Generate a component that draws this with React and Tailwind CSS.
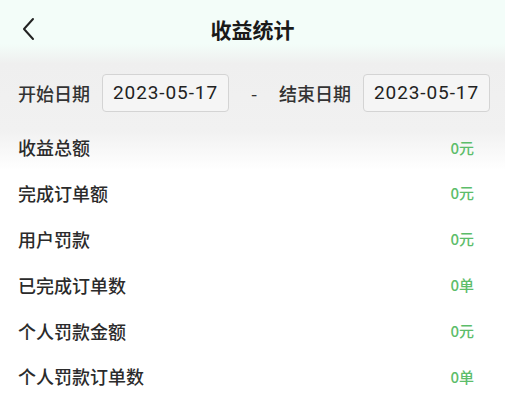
const rows = [
  { label: "收益总额", value: "0元" },
  { label: "完成订单额", value: "0元" },
  { label: "用户罚款", value: "0元" },
  { label: "已完成订单数", value: "0单" },
  { label: "个人罚款金额", value: "0元" },
  { label: "个人罚款订单数", value: "0单" },
];

const DateBox = ({ value }) => (
  <div
    className="ml-[8px] w-[127px] h-[38px] flex items-center justify-center border border-[#d4d4d4] rounded-[4px] bg-[#f5f5f5] text-[19px] tracking-[0.9px] text-[#222]"
    style={{ fontFamily: 'Roboto, "Noto Sans", sans-serif' }}
  >
    {value}
  </div>
);

const App = () => {
  return (
    <div
      className="w-[505px] h-[396px] overflow-hidden bg-[linear-gradient(to_bottom,#f3fdf9_0px,#f3fdf9_44px,#efefef_64px,#f1f1f1_130px,#ffffff_170px)]"
      style={{ fontFamily: '"Noto Sans CJK SC", "Noto Sans", sans-serif' }}
    >
      {/* Header */}
      <div className="relative h-[60px] flex items-center justify-center">
        <svg
          className="absolute left-[21px] top-[17px]"
          width="16"
          height="24"
          viewBox="0 0 16 24"
          fill="none"
          stroke="#222"
          strokeWidth="2"
          strokeLinecap="round"
          strokeLinejoin="round"
        >
          <path d="M12 2 L3 12 L12 22" />
        </svg>
        <h1 className="text-[21px] font-bold text-[#1a1a1a] -mt-[1px]">收益统计</h1>
      </div>

      {/* Date range */}
      <div className="flex items-center pl-[18px] pt-[14px] h-[52px]">
        <span className="w-[76px] text-[18px] font-medium text-[#333] whitespace-nowrap">开始日期</span>
        <DateBox value="2023-05-17" />
        <span className="w-[50px] text-center text-[18px] text-[#333]">-</span>
        <span className="w-[76px] text-[18px] font-medium text-[#333] whitespace-nowrap">结束日期</span>
        <DateBox value="2023-05-17" />
      </div>

      {/* Stats */}
      <div className="pt-[13px] flex flex-col">
        {rows.map((row) => (
          <div key={row.label} className="h-[45.8px] flex items-center justify-between pl-[18px] pr-[31px]">
            <span className="text-[18px] font-medium text-[#2b2b2b]">{row.label}</span>
            <span className="text-[15px] font-medium text-[#5cbd6a]">{row.value}</span>
          </div>
        ))}
      </div>
    </div>
  );
};

export default App;
